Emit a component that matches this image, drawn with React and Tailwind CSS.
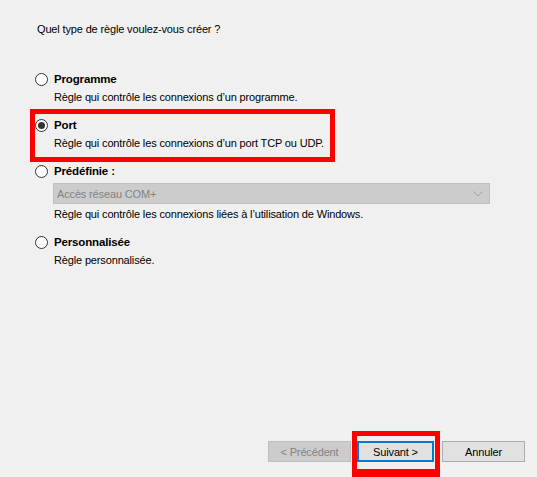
import React from "react";

const OPTIONS = [
  { key: "prog", label: "Programme", desc: "Règle qui contrôle les connexions d’un programme." },
  { key: "port", label: "Port", desc: "Règle qui contrôle les connexions d’un port TCP ou UDP.", checked: true },
  { key: "pre", label: "Prédéfinie :", desc: "Règle qui contrôle les connexions liées à l’utilisation de Windows.", combo: "Accès réseau COM+" },
  { key: "perso", label: "Personnalisée", desc: "Règle personnalisée." },
];

function Radio({ checked }) {
  return (
    <span className="w-[13px] h-[13px] rounded-full border border-[#333] bg-white flex items-center justify-center shrink-0">
      {checked && <span className="w-[7px] h-[7px] rounded-full bg-[#333]" />}
    </span>
  );
}

export default function App() {
  return (
    <div className="relative w-[537px] h-[477px] bg-[#f0f0f0] text-black text-[11px] tracking-[-0.15px] leading-[16px] font-['Segoe_UI','Liberation_Sans',sans-serif] flex flex-col overflow-hidden">
      <div className="pl-[37px] pt-[21px]">Quel type de règle voulez-vous créer ?</div>

      <div className="pl-[35px] pr-[47px] mt-[34px] flex flex-col gap-[12px]">
        {OPTIONS.map((o) => (
          <div key={o.key}>
            <div className="flex items-center gap-[6px]">
              <Radio checked={o.checked} />
              <span className="font-bold text-[11.5px]">{o.label}</span>
            </div>
            {o.combo && (
              <div className="ml-[18px] mt-[4px] h-[21px] bg-[#cccccc] border border-[#bfbfbf] flex items-center justify-between pl-[3px] pr-[6px] text-[#838383]">
                <span>{o.combo}</span>
                <svg width="10" height="6" viewBox="0 0 10 6" fill="none">
                  <path d="M0.5 0.5 L5 5 L9.5 0.5" stroke="#a0a0a0" strokeWidth="1" />
                </svg>
              </div>
            )}
            <div className="ml-[19px] mt-[2px]">{o.desc}</div>
          </div>
        ))}
      </div>

      <div className="mt-auto mb-[15px] pr-[12px] flex justify-end items-center">
        <button className="w-[83px] h-[21px] bg-[#cccccc] border border-[#bfbfbf] text-[#838383]">&lt; Précédent</button>
        <button className="ml-[6px] w-[77px] h-[21px] bg-[#e1e1e1] border-2 border-[#0078d7]">Suivant &gt;</button>
        <button className="ml-[8px] w-[83px] h-[21px] bg-[#e1e1e1] border border-[#adadad]">Annuler</button>
      </div>

      {/* annotation boxes */}
      <div className="absolute left-[30px] top-[109px] w-[305px] h-[53px] border-[5px] border-[#ff0000]" />
      <div className="absolute left-[352px] top-[431px] w-[88px] h-[46px] border-[5px] border-b-[8px] border-[#ff0000]" />
    </div>
  );
}
